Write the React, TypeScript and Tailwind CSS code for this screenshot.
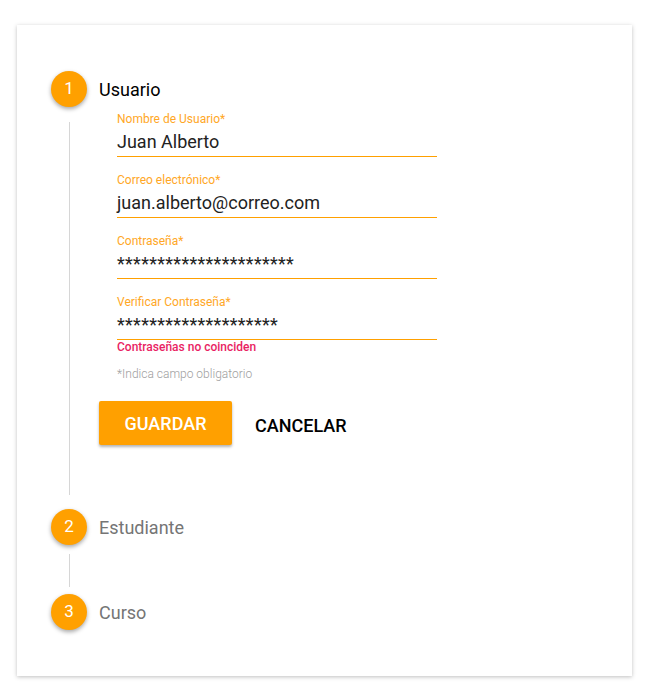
import React from 'react';

const StepCircle = ({ n }: { n: number }) => (
  <div className="w-9 h-9 shrink-0 rounded-full bg-[#ffa000] text-white text-[17px] flex items-center justify-center shadow-[0_2px_4px_rgba(0,0,0,0.35)]">
    {n}
  </div>
);

const Field = ({ label, value, first, secret }: { label: string; value: string; first?: boolean; secret?: boolean }) => (
  <div className={first ? '' : 'mt-[16px]'}>
    <div className="text-[12px] leading-[14px] text-[#ffa726]">{label}</div>
    <div
      className={`mt-[5px] h-[26px] border-b border-b-[#ffa000] text-[18px] leading-[22px] text-[#222] ${
        secret ? 'tracking-[0.3px]' : ''
      }`}
    >
      {value}
    </div>
  </div>
);

const App = () => {
  return (
    <div className="min-h-screen bg-white pt-[25px] pl-[17px] font-['Roboto',sans-serif]">
      <div className="w-[615px] bg-white shadow-[0_1px_4px_rgba(0,0,0,0.25)] pt-[46px] pb-[46px] pl-[34px]">
        {/* Step 1 */}
        <div className="flex items-center">
          <StepCircle n={1} />
          <span className="ml-[12px] text-[18px] text-black">Usuario</span>
        </div>
        <div className="flex">
          <div className="w-[36px] flex justify-center pt-[15px]">
            <div className="w-px bg-[#d6d6d6]" />
          </div>
          <div className="pl-[12px] pt-[5px] pb-[50px] w-[400px]">
            <div className="ml-[18px] w-[320px]">
              <Field first label="Nombre de Usuario*" value="Juan Alberto" />
              <Field label="Correo electrónico*" value="juan.alberto@correo.com" />
              <Field secret label="Contraseña*" value="**********************" />
              <Field secret label="Verificar Contraseña*" value="********************" />
              <div className="text-[12px] leading-[14px] font-medium text-[#e91e63]">
                Contraseñas no coinciden
              </div>
              <div className="mt-[13px] text-[12px] leading-[14px] font-light text-[#9e9e9e]">
                *Indica campo obligatorio
              </div>
            </div>
            <div className="mt-[20px] flex items-center">
              <button className="w-[133px] h-[44px] rounded-[2px] bg-[#ffa000] text-white text-[18px] font-medium shadow-[0_2px_3px_rgba(0,0,0,0.3)]">
                GUARDAR
              </button>
              <button className="ml-[23px] mt-[4px] text-[18px] font-medium text-black">
                CANCELAR
              </button>
            </div>
          </div>
        </div>

        {/* Step 2 */}
        <div className="flex items-center mt-[14px]">
          <StepCircle n={2} />
          <span className="ml-[12px] text-[18px] text-[#757575]">Estudiante</span>
        </div>
        <div className="flex h-[49px]">
          <div className="w-[36px] flex justify-center pt-[9px] pb-[7px]">
            <div className="w-px bg-[#d6d6d6]" />
          </div>
        </div>

        {/* Step 3 */}
        <div className="flex items-center">
          <StepCircle n={3} />
          <span className="ml-[12px] text-[18px] text-[#757575]">Curso</span>
        </div>
      </div>
    </div>
  );
};

export default App;
